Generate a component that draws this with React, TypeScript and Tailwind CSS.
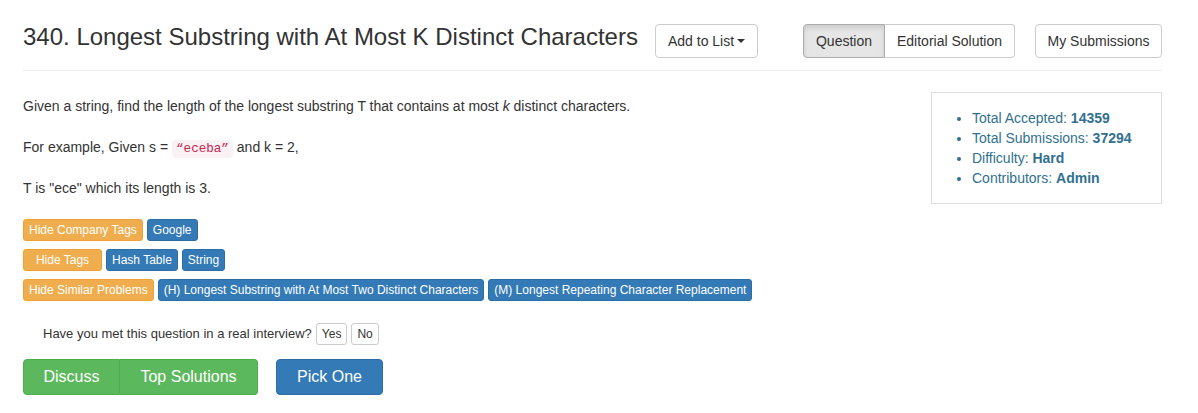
export default function App() {
  const font = { fontFamily: '"Liberation Sans", Arial, sans-serif' };

  return (
    <div className="min-h-screen bg-white text-[#333]" style={font}>
      <div className="w-[1139px] ml-[23px]">
        {/* header */}
        <div className="box-border h-[71px] flex items-start justify-between pt-[20px] border-b border-[#eee]">
          <div className="flex items-start">
            <h3 className="text-[24px] leading-[34px] text-[#333] whitespace-nowrap">
              340. Longest Substring with At Most K Distinct Characters
            </h3>
            <button className="mt-[4px] ml-[17px] h-[34px] px-[12px] text-[14px] border border-[#ccc] rounded bg-white flex items-center whitespace-nowrap">
              Add to List
              <span className="ml-[3px] inline-block w-0 h-0 border-l-[4px] border-r-[4px] border-t-[4px] border-l-transparent border-r-transparent border-t-[#333]" />
            </button>
          </div>
          <div className="mt-[4px] flex items-start gap-[20px]">
            <div className="flex">
              <button className="h-[34px] text-[14px] border border-[#adadad] bg-[#e6e6e6] rounded-l shadow-[inset_0_3px_5px_rgba(0,0,0,0.125)] w-[82px] whitespace-nowrap">
                Question
              </button>
              <button className="h-[34px] text-[14px] border border-l-0 border-[#ccc] bg-white rounded-r w-[130px] whitespace-nowrap">
                Editorial Solution
              </button>
            </div>
            <button className="h-[34px] text-[14px] border border-[#ccc] bg-white rounded w-[127px] whitespace-nowrap">
              My Submissions
            </button>
          </div>
        </div>

        {/* body */}
        <div className="flex justify-between">
          <div className="text-[14px] leading-5">
            <p className="mt-[25px]">
              Given a string, find the length of the longest substring T that contains at most <em>k</em> distinct characters.
            </p>
            <p className="mt-[21px]">
              For example, Given s ={" "}
              <code
                className="px-[4px] py-[2px] text-[12.6px] leading-none text-[#c7254e] bg-[#f9f2f4] rounded"
                style={{ fontFamily: '"Liberation Mono", "DejaVu Sans Mono", monospace' }}
              >
                “eceba”
              </code>{" "}
              and k = 2,
            </p>
            <p className="mt-[21px]">T is "ece" which its length is 3.</p>

            <div className="mt-[21px] flex flex-col gap-[8px] text-[12px] leading-[20px] text-white">
              <div className="flex gap-[4px]">
                <span className="px-[5px] border border-[#eea236] bg-[#f0ad4e] rounded-[3px]">Hide Company Tags</span>
                <span className="px-[5px] border border-[#2e6da4] bg-[#337ab7] rounded-[3px]">Google</span>
              </div>
              <div className="flex gap-[4px]">
                <span className="w-[79px] text-center border border-[#eea236] bg-[#f0ad4e] rounded-[3px]">Hide Tags</span>
                <span className="px-[5px] border border-[#2e6da4] bg-[#337ab7] rounded-[3px]">Hash Table</span>
                <span className="px-[5px] border border-[#2e6da4] bg-[#337ab7] rounded-[3px]">String</span>
              </div>
              <div className="flex gap-[4px]">
                <span className="px-[5px] border border-[#eea236] bg-[#f0ad4e] rounded-[3px]">Hide Similar Problems</span>
                <span className="px-[5px] border border-[#2e6da4] bg-[#337ab7] rounded-[3px]">
                  (H) Longest Substring with At Most Two Distinct Characters
                </span>
                <span className="px-[5px] border border-[#2e6da4] bg-[#337ab7] rounded-[3px]">
                  (M) Longest Repeating Character Replacement
                </span>
              </div>
            </div>

            <div className="mt-[22px] ml-[20px] flex items-center text-[13px]">
              <span>Have you met this question in a real interview?</span>
              <button className="ml-[4px] h-[22px] px-[5px] text-[12px] border border-[#ccc] rounded-[3px] bg-white">Yes</button>
              <button className="ml-[4px] h-[22px] px-[5px] text-[12px] border border-[#ccc] rounded-[3px] bg-white">No</button>
            </div>

            <div className="mt-[14px] flex gap-[18px] text-[16px] text-white">
              <div className="flex">
                <button className="h-[36px] w-[97px] bg-[#5cb85c] border border-[#4cae4c] rounded-l">Discuss</button>
                <button className="h-[36px] w-[138px] bg-[#5cb85c] border border-l-0 border-[#4cae4c] rounded-r">Top Solutions</button>
              </div>
              <button className="h-[36px] w-[107px] bg-[#337ab7] border border-[#2e6da4] rounded">Pick One</button>
            </div>
          </div>

          <div className="mt-[21px] w-[231px] h-[112px] border border-[#ddd] py-[15px]">
            <ul className="list-disc pl-[40px] text-[14px] leading-5 text-[#31708f]">
              <li>Total Accepted: <b>14359</b></li>
              <li>Total Submissions: <b>37294</b></li>
              <li>Difficulty: <b>Hard</b></li>
              <li>Contributors: <b>Admin</b></li>
            </ul>
          </div>
        </div>
      </div>
    </div>
  );
}
